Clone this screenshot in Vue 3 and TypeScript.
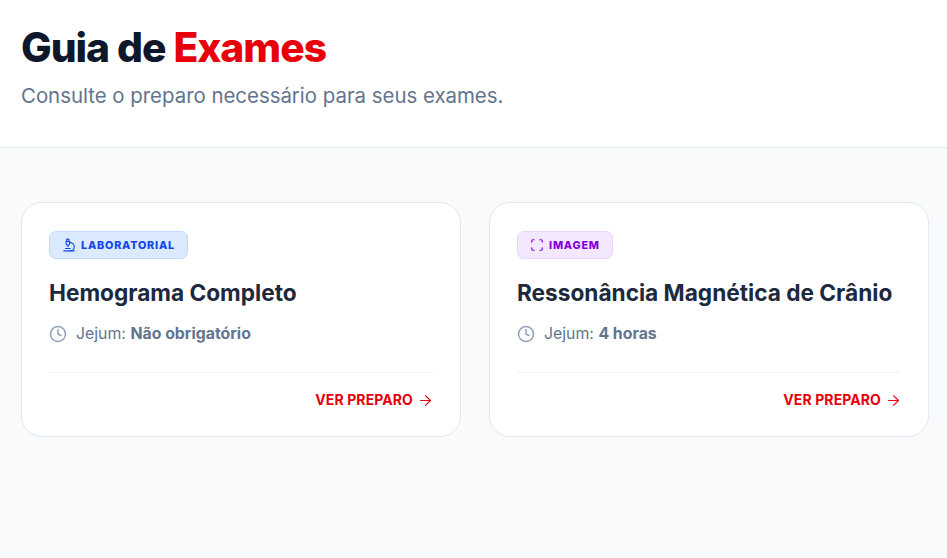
<script setup lang="ts">
interface Exam {
  kind: string
  tone: 'lab' | 'img'
  title: string
  fast: string
}
const exams: Exam[] = [
  { kind: 'LABORATORIAL', tone: 'lab', title: 'Hemograma Completo', fast: 'Não obrigatório' },
  { kind: 'IMAGEM', tone: 'img', title: 'Ressonância Magnética de Crânio', fast: '4 horas' },
]
</script>

<template>
  <div class="page">
    <header class="top">
      <h1>Guia de <span>Exames</span></h1>
      <p>Consulte o preparo necessário para seus exames.</p>
    </header>
    <main class="grid">
      <article v-for="e in exams" :key="e.title" class="card">
        <div class="badge" :class="e.tone">
          <svg v-if="e.tone === 'lab'" viewBox="0 0 24 24" class="bi">
            <path d="M6 18h8" /><path d="M3 22h18" /><path d="M14 22a7 7 0 1 0 0-14h-1" /><path d="M9 14h2" />
            <path d="M9 12a2 2 0 0 1-2-2V6h6v4a2 2 0 0 1-2 2Z" /><path d="M12 6V3a1 1 0 0 0-1-1H9a1 1 0 0 0-1 1v3" />
          </svg>
          <svg v-else viewBox="0 0 24 24" class="bi">
            <path d="M3 7V5a2 2 0 0 1 2-2h2" /><path d="M17 3h2a2 2 0 0 1 2 2v2" />
            <path d="M21 17v2a2 2 0 0 1-2 2h-2" /><path d="M7 21H5a2 2 0 0 1-2-2v-2" />
          </svg>
          <span>{{ e.kind }}</span>
        </div>
        <h2>{{ e.title }}</h2>
        <div class="fast">
          <svg viewBox="0 0 24 24" class="clock">
            <circle cx="12" cy="12" r="10" /><path d="M12 6v6l4 2" />
          </svg>
          <span>Jejum: <b>{{ e.fast }}</b></span>
        </div>
        <div class="foot">
          <span>VER PREPARO</span>
          <svg viewBox="0 0 24 24" class="arrow"><path d="M5 12h14" /><path d="m12 5 7 7-7 7" /></svg>
        </div>
      </article>
    </main>
  </div>
</template>

<style>
html, body { margin: 0; background: #f8fafc; }
</style>

<style scoped>
.page {
  min-height: 558px;
  background: #f8fafc;
  font-family: Inter, "Liberation Sans", sans-serif;
  display: flex;
  flex-direction: column;
}
.top {
  background: #fff;
  border-bottom: 1px solid #e2e8f0;
  padding: 24px 21px 0;
  height: 123px;
}
h1 {
  margin: 0;
  font-size: 40.8px;
  line-height: 46px;
  font-weight: 800;
  letter-spacing: -1.02px;
  color: #0f172b;
}
h1 span { color: #e7000b; }
.top p {
  margin: 12px 0 0;
  font-size: 20.4px;
  line-height: 28px;
  color: #62748e;
}
.grid {
  display: grid;
  grid-template-columns: 440px 440px;
  gap: 28px;
  padding: 54px 0 0 21px;
}
.card {
  box-sizing: border-box;
  height: 235px;
  background: #fff;
  border: 1px solid #e2e8f0;
  border-radius: 21px;
  padding: 28px 27px 0;
}
.badge {
  display: inline-flex;
  align-items: center;
  gap: 5px;
  height: 28px;
  box-sizing: border-box;
  padding: 0 12px;
  border-radius: 7px;
  border: 1px solid;
  font-size: 10.8px;
  font-weight: 800;
  letter-spacing: 0.8px;
  vertical-align: top;
}
.lab { background: #dbeafe; border-color: #bedbff; color: #1447e6; }
.img { background: #f3e8ff; border-color: #e9d4ff; color: #8200db; }
.bi { width: 14px; height: 14px; fill: none; stroke: currentColor; stroke-width: 2; stroke-linecap: round; stroke-linejoin: round; }
h2 {
  margin: 20px 0 0;
  font-size: 22.65px;
  line-height: 28px;
  font-weight: 700;
  color: #1d293d;
}
.fast {
  display: flex;
  align-items: center;
  gap: 9px;
  margin-top: 15px;
  font-size: 15.85px;
  line-height: 24px;
  color: #62748e;
}
.clock { width: 18px; height: 18px; fill: none; stroke: #90a1b9; stroke-width: 2; stroke-linecap: round; stroke-linejoin: round; }
.fast b { font-weight: 700; color: #62748e; }
.foot {
  margin-top: 26px;
  border-top: 1px solid #f1f5f9;
  padding-top: 18px;
  display: flex;
  justify-content: flex-end;
  align-items: center;
  gap: 4px;
  font-size: 14px;
  line-height: 18px;
  font-weight: 700;
  letter-spacing: 0.1px;
  color: #e7000b;
}
.arrow { width: 17px; height: 17px; margin-right: -1px; fill: none; stroke: currentColor; stroke-width: 1.6; stroke-linecap: round; stroke-linejoin: round; }
</style>
